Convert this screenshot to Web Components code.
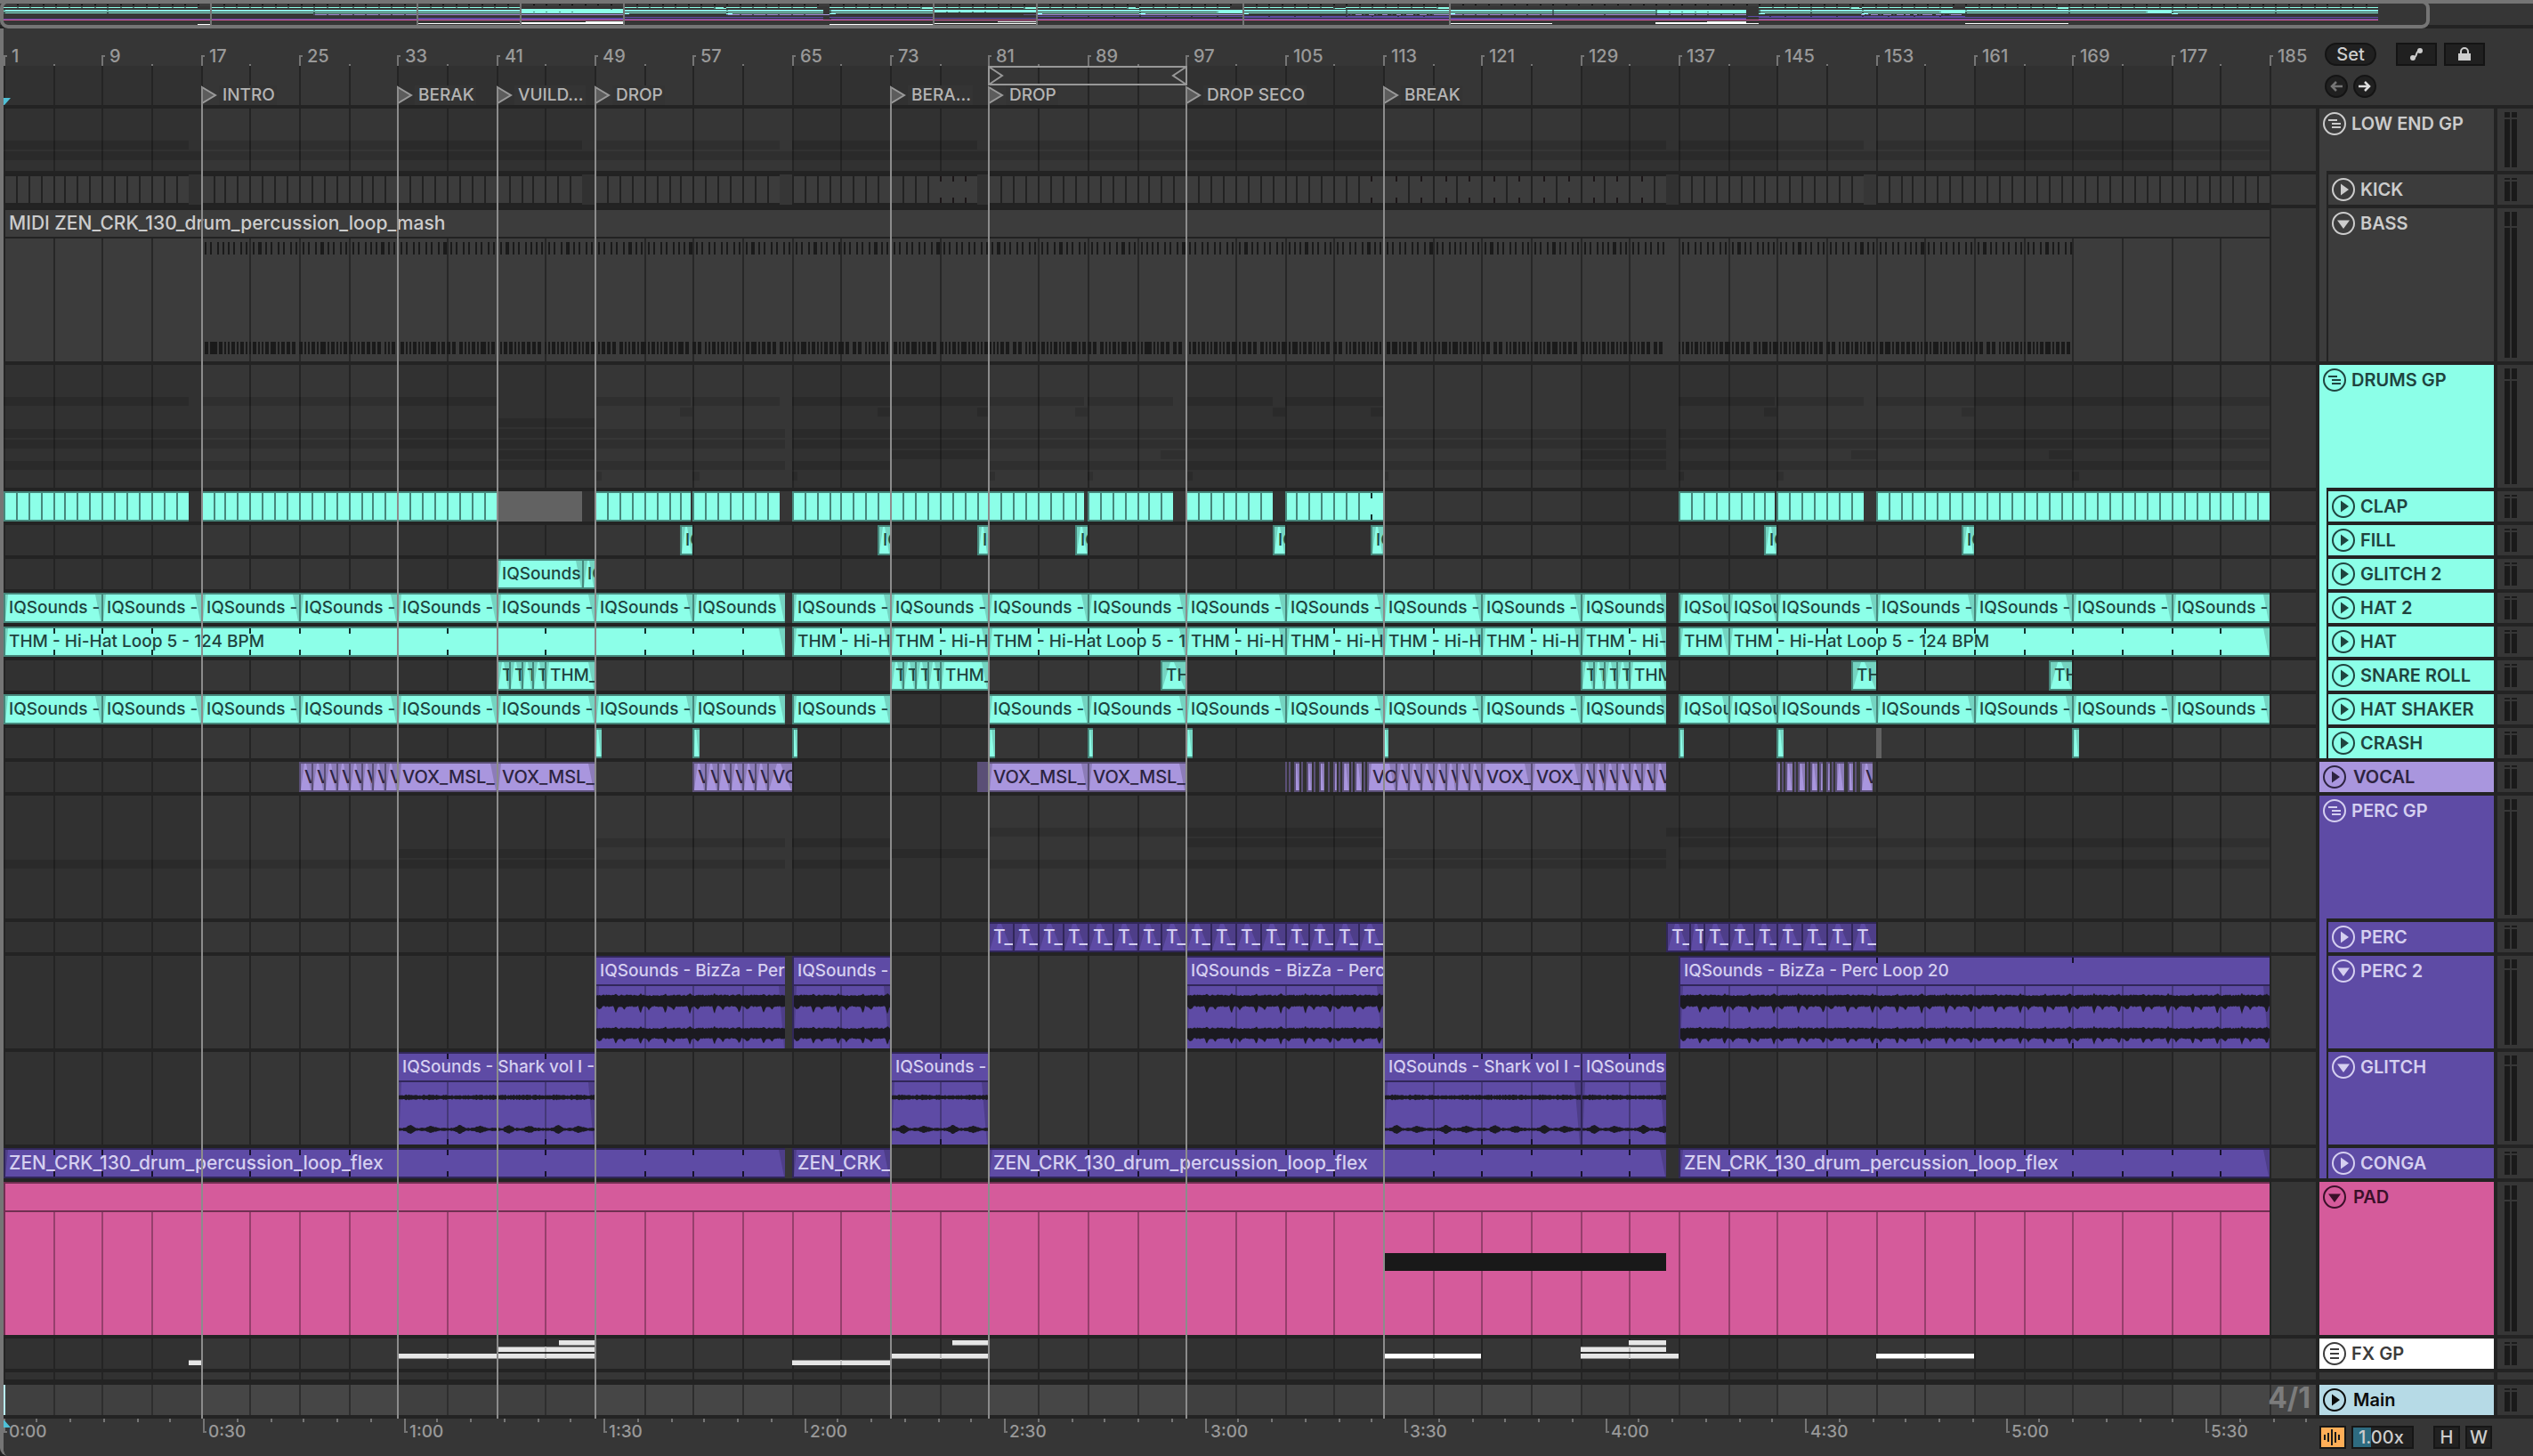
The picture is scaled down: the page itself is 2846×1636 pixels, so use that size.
<!DOCTYPE html>
<html lang="en">
<head>
<meta charset="utf-8">
<title>Arrangement</title>
<style>
html,body{margin:0;background:#232323;height:100%}
body{font:500 20px/24px Inter,"Liberation Sans",sans-serif;color:#b4b4b4}
</style>
</head>
<body>
<arrangement-view></arrangement-view>
<script>
/* Zoom level of the timeline, in pixels per bar; positions snap to the 2px grid */
const BAR = 13.84, LAST = 320;
const X = b => 2 * Math.round((b - 1) * BAR / 2 - .12);
const rect = (x, y, w, h, f) => `<rect x="${x}" y="${y}" width="${w}" height="${h}" fill="${f}"/>`;

const SKIN = {
  gray:   {bg:'#3c3c3c', edge:'#222222', ink:'#cccccc', grid:'#272727', tick:'#1c1618'},
  mint:   {bg:'#8cffe8', edge:'#46877b', ink:'#1f443f', grid:'#46877b', tick:'#12302b'},
  vocal:  {bg:'#a996de', edge:'#5a4f76', ink:'#2d2440', grid:'#5a4f76', tick:'#1d1730'},
  purple: {bg:'#5e4ba5', edge:'#31275a', ink:'#d5cff0', grid:'#453879', tick:'#17122c'},
  pink:   {bg:'#d55b9b', edge:'#712f52', ink:'#3a1029', grid:'#963f6c', tick:'#3a1029'},
  white:  {bg:'#ffffff', edge:'#8c8c8c', ink:'#3c3c3c', grid:'#8c8c8c', tick:'#3c3c3c'},
  blue:   {bg:'#b6dae6', edge:'#6d838a', ink:'#0c0c0c', grid:'#6d838a', tick:'#0c0c0c'}
};

const run = (from, to, step, text) => {
  const out = [];
  for (let b = from; b < to; b += step) out.push({s: b, e: Math.min(b + step, to), t: text});
  return out;
};
const cut = (...pairs) => pairs.map(([s, e]) => ({s, e, slice: 1}));
/* Clip names are shortened to about the room that the clip has */
const fit = (name, bars) => name.slice(0, Math.max(1, Math.ceil(bars * BAR / 8)));
const IQ = 'IQSounds -', TH = 'THM - Hi-Hat Loop 5 - 124 BPM', ZEN = 'ZEN_CRK_130_drum_percussion_loop_flex';
const SHARK = 'IQSounds - Shark vol I -', BIZ = 'IQSounds - BizZa - Perc Loop 20';

const kick = cut([1,16],[17,48],[49,64],[65,80],[81,136],[137,152],[153,185]);
const bass = [{s:1, e:185, t:'MIDI ZEN_CRK_130_drum_percussion_loop_mash', body:'midi'}];
const clap = [...cut([1,16],[17,41]), {s:41, e:48, off:1}, ...cut([49,56.8],[57,64],[65,88.7],[89,96],[97,104],[105,113],[137,144.8],[145,152],[153,185])];
const fill = [56,72,80,88,104,112,144,160].map(b => ({s:b, e:b+1, t:'IQ', fade:1}));
const glitch2 = [{s:41, e:48, t:'IQSounds'}, {s:48, e:49, t:'IQ'}];
const hat2 = [...run(1,57,8,IQ), {s:57,e:64.5,t:'IQSounds'}, ...run(65,129,8,IQ), {s:129,e:136,t:'IQSounds'}, {s:137,e:141,t:'IQSou'}, {s:141,e:145,t:'IQSou'}, ...run(145,185,8,IQ)];
const hat = [[1,64.5],[65,73],[73,81],[81,97],[97,105],[105,113],[113,121],[121,129],[129,136],[137,141],[141,185]]
  .map(([s,e]) => ({s, e, t:e - s < 5 ? 'THM' : e - s < 9 ? 'THM - Hi-H' : e - s < 17 ? 'THM - Hi-Hat Loop 5 - 1' : TH, ticks:4}));
const snare = [...run(41,45,1,'T'), {s:45,e:49,t:'THM_'}, ...run(73,77,1,'T'), {s:77,e:81,t:'THM_'}, {s:95,e:97,t:'TH'},
  ...run(129,133,1,'T'), {s:133,e:136,t:'THM'}, {s:151,e:153,t:'TH'}, {s:167,e:169,t:'TH'}];
const shaker = hat2.filter(c => c.s !== 73);
const crash = [49,57,65,81,89,97,113,137,145,153,169].map(b => ({s:b, e:b+.5, thin:1, off:b === 153}));
const px = n => (n - 4) / BAR + 1.01;
const shards = (...p) => p.map(([a, b]) => ({s:px(a), e:px(b), thin:1, solid:b - a < 4}));
const vocal = [...run(25,33,1,'V'), {s:33,e:41,t:'VOX_MSL_'}, {s:41,e:49,t:'VOX_MSL_'},
  ...run(57,63,1,'V'), {s:63,e:65,t:'VO'}, {s:80,e:81,solid:1,thin:1}, {s:81,e:89,t:'VOX_MSL_'}, {s:89,e:97,t:'VOX_MSL_'},
  ...shards([1444,1446],[1448,1450],[1454,1460],[1462,1464],[1468,1474],[1476,1478],[1482,1488],[1492,1494],[1498,1502],[1504,1506],[1508,1516],[1518,1520],[1522,1530],[1532,1534]),
  {s:px(1536),e:114,t:'VO'}, ...run(114,121,1,'V'), {s:121,e:125,t:'VOX_'}, {s:125,e:129,t:'VOX_'}, ...run(129,136,1,'V'),
  ...shards([1996,2000],[2002,2004],[2006,2014],[2016,2018],[2020,2028],[2030,2032],[2034,2042],[2044,2048],[2052,2056],[2058,2060],[2062,2072],[2076,2082],[2084,2086]),
  {s:px(2090),e:px(2104),t:'V'}];
const perc = [...run(81,113,2,'T_'), {s:136,e:137.8,t:'T_'}, {s:137.8,e:139,t:'T'}, ...run(139,153,2,'T_')];
const perc2 = [[49,64.5,'IQSounds - BizZa - Per'],[65,73,IQ],[97,113,'IQSounds - BizZa - Perc'],[137,185,BIZ]].map(([s,e,t]) => ({s, e, t, body:'loop', ticks:16}));
const glitch = [[33,49,SHARK],[73,81,IQ],[113,129,SHARK],[129,136,'IQSounds']].map(([s,e,t]) => ({s, e, t, body:'thin', ticks:4}));
const conga = [[1,64.5,ZEN],[65,73,'ZEN_CRK_'],[81,136,ZEN],[137,185,ZEN]].map(([s,e,t]) => ({s, e, t, ticks:4}));
const pad = [{s:1, e:185, t:'', body:'note'}];
const fx = [[[46.1,49],[78,81],[133,136]], [[41,49],[129,136]], [[33,41],[41,49],[73,81],[113,121],[129,137],[153,161]], [[16,17],[65,73]]]
  .map(r => r.map(([s, e]) => ({s, e})));

const TRACKS = [
  {n:'LOW END GP', skin:'gray', h:70, group:1, bands:[kick, [{s:1,e:185}]]},
  {n:'KICK', skin:'gray', h:34, child:1, clips:kick},
  {n:'BASS', skin:'gray', h:172, child:1, open:1, clips:bass, size:21},
  {n:'DRUMS GP', skin:'mint', h:138, group:1, bands:[clap.filter(c => !c.off), fill, glitch2, hat2, hat, snare, shaker, crash.filter(c => !c.off)]},
  {n:'CLAP', skin:'mint', h:34, child:1, clips:clap},
  {n:'FILL', skin:'mint', h:34, child:1, clips:fill},
  {n:'GLITCH 2', skin:'mint', h:34, child:1, clips:glitch2},
  {n:'HAT 2', skin:'mint', h:34, child:1, clips:hat2},
  {n:'HAT', skin:'mint', h:34, child:1, clips:hat},
  {n:'SNARE ROLL', skin:'mint', h:34, child:1, clips:snare},
  {n:'HAT SHAKER', skin:'mint', h:34, child:1, clips:shaker},
  {n:'CRASH', skin:'mint', h:34, child:1, clips:crash},
  {n:'VOCAL', skin:'vocal', h:34, clips:vocal, size:20},
  {n:'PERC GP', skin:'purple', h:138, group:1, bands:[perc, perc2, glitch, conga]},
  {n:'PERC', skin:'purple', h:34, child:1, clips:perc, size:21},
  {n:'PERC 2', skin:'purple', h:104, child:1, open:1, clips:perc2},
  {n:'GLITCH', skin:'purple', h:104, child:1, open:1, clips:glitch},
  {n:'CONGA', skin:'purple', h:34, child:1, clips:conga, size:21},
  {n:'PAD', skin:'pink', h:172, open:1, clips:pad},
  {n:'FX GP', skin:'white', h:34, group:1, flat:1, fx},
  {n:'', h:8, blank:1},
  {n:'Main', skin:'blue', h:34, main:1}
];
const LOCATORS = [[17,'INTRO'],[33,'BERAK'],[41,'VUILD...'],[49,'DROP'],[73,'BERA...'],[81,'DROP'],[97,'DROP SECO'],[113,'BREAK']];

/* Alternating 16-bar shading with a line every 4 bars */
function grid(h, dark = '#313131', light = '#363636', line = '#242424') {
  let s = rect(0, 0, '100%', h, light);
  for (let b = 1; b < LAST; b += 32) s += rect(X(b), 0, X(b + 16) - X(b), h, dark);
  s += gridLines(h, line, 1, LAST);
  return s;
}
function gridLines(h, line, from, to, y = 0, step = 4) {
  let d = '';
  for (let b = from; b < to; b += step) d += `M${X(b)} ${y}h2v${h}h-2z`;
  return `<path d="${d}" fill="${line}"/>`;
}

class Base extends HTMLElement {
  constructor() { super(); this.attachShadow({mode: 'open'}); }
  connectedCallback() { this.render(); }
  paint(html) { this.shadowRoot.innerHTML = html; }
}

customElements.define('song-overview', class extends Base {
  render() {
    const M = b => Math.round((b - 1) * 14.5);
    let s = rect(0, 0, 2668, 3, '#3c3c3c');
    for (let b = 2; b < 185; b++) s += rect(M(b), 1, 2, 1, '#000');
    let y = 0;
    for (const t of TRACKS) {
      if (t.fx) {
        t.fx.forEach((r, i) => r.forEach(c => s += rect(M(c.s), 20 + i, M(c.e) - M(c.s), 1, '#fff')));
        break;
      }
      if (t.clips && t.skin !== 'gray') {
        const k = SKIN[t.skin];
        for (const c of t.clips) {
          if (c.off) continue;
          s += rect(M(c.s), y, Math.max(2, M(c.e) - M(c.s)), 1, c.solid ? k.edge : k.bg);
          if (c.slice) for (let b = c.s + 1; b < c.e; b++) s += rect(M(b), y, 2, 1, k.edge);
          else if (c.e - c.s >= 1 && c.e - c.s < 9 && !c.body) s += rect(M(c.s), y, 2, 1, k.edge);
        }
      }
      y++;
    }
    for (const [b] of LOCATORS) s += rect(M(b), 0, 2, 24, '#757575');
    this.paint(`<style>
      :host{display:flex;height:32px;background:linear-gradient(#757575 4px,#363636 4px 28px,#232323 28px)}
      .frame{flex:1;margin-right:116px;box-sizing:border-box;border:4px solid #757575;border-radius:9px;background:#363636;overflow:hidden}
      svg{display:block;width:100%;height:24px}
    </style><div class="frame"><svg shape-rendering="crispEdges" role="img" aria-label="Song overview">${s}</svg></div>`);
  }
});

customElements.define('bar-ruler', class extends Base {
  render() {
    let ticks = '', nums = '';
    for (let b = 1; b < 189; b += 4) {
      if ((b - 1) % 8) ticks += `M${X(b)} 40h2v2h-2z`;
      else {
        ticks += `M${X(b)} 30h4v2h-2v10h-2z`;
        nums += `<span style="left:${X(b)}px">${b}</span>`;
      }
    }
    this.paint(`<style>
      :host{display:block;position:relative;height:42px;background:#363636;overflow:hidden;color:#999}
      svg{display:block;width:100%;height:42px}
      span{position:absolute;top:19px;padding-left:9px}
    </style><svg shape-rendering="crispEdges"><path d="${ticks}" fill="#757575"/></svg>${nums}`);
  }
});

customElements.define('locator-strip', class extends Base {
  render() {
    const w = X(97) - X(81) + 2;
    const marks = LOCATORS.map(([b, t]) => `<div class="mark" style="left:${X(b)}px">
      <svg width="18" height="22"><path d="M1 2L16 11L1 20Z" fill="#5c5c5c" stroke="#9a9a9a" stroke-width="2"/></svg><span>${t}</span></div>`).join('');
    this.paint(`<style>
      :host{display:block;position:relative;height:44px;overflow:hidden;font-size:19px}
      .grid{display:block;width:100%;height:44px}
      .mark{position:absolute;top:22px;height:22px;display:flex;align-items:center}
      .mark span{padding:0 2px 0 4px;margin-left:2px;line-height:22px;background:#343434}
      .loop{position:absolute;top:0;left:${X(81)}px}
      .start{position:absolute;left:0;top:36px}
    </style><svg class="grid" shape-rendering="crispEdges">${grid(44)}</svg>
    <svg class="loop" width="${w}" height="22" fill="none" stroke="#989898" stroke-width="2"><rect x="1" y="1" width="${w - 2}" height="20"/><path d="M1 1L16 11L1 21M${w - 1} 1L${w - 16} 11L${w - 1} 21"/></svg>
    ${marks}<svg class="start" width="8" height="8"><path d="M0 0H8L1 8H0Z" fill="#4fc0d6"/></svg>`);
  }
});

function wave(kind, w) {
  const edge = [[], [], [], []];
  const n = i => { const v = Math.sin(i * 12.9898) * 43758.5453; return v - Math.floor(v); };
  for (let x = 0; x <= w; x++) {
    const r = n(x % 166), q = n((x % 166) + 400);
    if (kind === 'loop') {
      const p = x % 27.68, spike = Math.max(0, 8 - Math.abs(p - 24) * 3), dip = Math.max(0, 4 - Math.abs(p - 5.5) * 1.2);
      const top = r * 1.6 + Math.max(0, 2 - Math.abs(p - 24));
      edge[0].push([x, 11 - top]); edge[1].push([x, 22 + q * 1.6 + spike + dip]);
      edge[2].push([x, 48 - top]); edge[3].push([x, 58 + q * 1.6 + spike * .8 + dip]);
    } else {
      const p = x % 55.36, a = 1.6 + r * 1.6, bump = Math.max(0, 3.4 - Math.abs(p - 15) * .5) + Math.max(0, 2.4 - Math.abs(p - 38) * .3);
      edge[0].push([x, 17 - a]); edge[1].push([x, 17 + a]);
      edge[2].push([x, 53 - 1 - q - bump]); edge[3].push([x, 53 + 1 + q + bump]);
    }
  }
  const shape = (a, b) => 'M' + a.concat(b.reverse()).map(p => p[0] + ' ' + p[1].toFixed(1)).join('L') + 'Z';
  return `<path d="${shape(edge[0], edge[1])}${shape(edge[2], edge[3])}" fill="#1b1a21"/>`;
}

function midi() {
  let top = '', low = '', i = 0;
  const wide = [2,4,4,4,4,2,2,4,2,4,2,2,4,2,2,4,4,2];
  for (let b = 17; b < 169; b++) {
    if (b === 136) continue;
    const x = X(b);
    top += rect(x + 4, 4, 2, 14, '#1a1a1a') + rect(x + 10, 4, b % 5 === 1 ? 4 : 2, 14, '#1a1a1a');
    for (let p = x; p < x + 12;) { const w = wide[i++ % wide.length]; low += rect(p, 116, w, 14, '#1a1a1a'); p += w + 2; }
  }
  return top + low;
}

customElements.define('clip-lane', class extends Base {
  render() {
    const t = this.track, h = t.h, k = SKIN[t.skin];
    let back = t.main ? grid(h, '#404040', '#464646', '#2e2e2e') : grid(h);
    (t.bands || []).forEach((r, i) => r.forEach(c => back += rect(X(c.s), 36 + i * 12, X(c.e) - X(c.s), 10, 'rgba(0,0,0,.13)')));
    (t.fx || []).forEach((r, i) => r.forEach(c => {
      const x = X(c.s), w = X(c.e) - x, y = [2, 9, 17, 24][i], f = c.s === 113 || c.s === 153 ? '#fff' : '#e6e6e6';
      back += rect(x, y, w, 6, f) + rect(x, i % 2 ? y : y + 5, w, 1, '#8f8f8f');
      for (let b = Math.ceil((c.s + 3) / 4) * 4 + 1; b < c.e; b += 4) back += rect(X(b), y, 2, 6, '#bdbdbd');
    }));
    let clips = '';
    for (const c of t.clips || []) {
      const x = X(c.s), w = Math.max(2, X(c.e) - x);
      let svg = '';
      if (c.off) { clips += `<div class="clip off" style="left:${x}px;width:${w}px"></div>`; continue; }
      if (c.slice) {
        let d = '', tk = '';
        for (let b = c.s; b < c.e; b++) {
          const o = X(b) - x;
          const merged = t.n === 'KICK' ? (b > 76 && b < 80) || (b > 111 && b < 136 && b % 2 === 0) : b === 112;
          if (merged) tk += `M${o} 2h2v6h-2zM${o} 26h2v6h-2z`; else d += `M${o} 0h2v34h-2z`;
        }
        svg = `<path d="${d}" fill="${k.edge}"/><path d="${tk}" fill="${k.tick}"/>`;
      } else if (!c.solid) {
        const y0 = c.body ? 34 : 2, y1 = c.body ? h : h - 2, f = 'rgba(0,0,0,.17)';
        if (c.body) {
          let d = '';
          for (let b = c.s + 4; b < c.e; b += 4) d += `M${X(b) - x} 34h2v${h - 34}h-2z`;
          svg += `<path d="${d}" fill="${k.grid}"/>` + rect(0, 32, w, 2, k.edge);
        }
        if (c.body === 'midi') svg += `<g transform="translate(0 34)">${midi()}</g>`;
        else if (c.body === 'note') svg += rect(X(113) + 2, 80, X(136) - X(113) - 2, 20, '#191919');
        else {
          const r = w > 30 ? 7 : Math.round(w * .45), l = w > 30 ? 5 : Math.round(w * .4);
          svg += `<g shape-rendering="auto" fill="${f}"><path d="M${w - r} ${y0}H${w}V${y1}H${w - 1}Z"/><path d="M0 ${y0}H${l}L2 ${y1}H0Z"/></g>`;
          if (c.body) svg += `<g shape-rendering="auto" transform="translate(0 34)">${wave(c.body, w)}</g>`;
        }
        if (c.ticks) {
          let d = '';
          for (let b = c.s + c.ticks; b < c.e; b += c.ticks) d += `M${X(b) - x} 2h2v6h-2zM${X(b) - x} ${y1 - 6}h2v6h-2z`;
          svg += `<path d="${d}" fill="${k.tick}"/>`;
        }
      }
      clips += `<div class="clip${c.solid ? ' solid' : ''}${c.body ? ' open' : ''}" style="left:${x}px;width:${w}px"><svg shape-rendering="crispEdges">${svg}</svg>${c.t ? `<span>${c.t}</span>` : ''}</div>`;
    }
    this.paint(`<style>
      :host{display:block;position:relative;flex:1;min-width:0;overflow:hidden;height:${h}px}
      .grid{display:block;width:100%;height:${h}px}
      .clip{position:absolute;top:0;height:${h}px;box-sizing:border-box;overflow:hidden;white-space:pre;font-size:${t.size || 19}px;
        background:${k ? k.bg : 'none'};color:${k ? k.ink : 'inherit'};
        border:solid ${k ? k.edge : '#000'};border-width:2px 0 2px 2px}
      .clip.open{border-bottom-width:0}
      .clip svg{position:absolute;left:-2px;top:-2px;width:calc(100% + 2px);height:${h}px}
      .clip span{position:relative;display:block;padding-left:4px;line-height:30px}
      .clip.solid{background:${k ? k.edge : 'none'}}
      .clip.off{background:#626262;border:0}
      .sig{position:absolute;right:6px;top:0;font-size:32px;font-weight:700;line-height:30px;color:#7c7c7c}
      .cue{position:absolute;left:0;top:0;width:2px;height:34px;background:#b9edf6}
    </style><svg class="grid" shape-rendering="crispEdges">${back}</svg>${clips}${t.main ? '<i class="cue"></i><span class="sig">4/1</span>' : ''}`);
  }
});

customElements.define('track-header', class extends Base {
  render() {
    const t = this.track;
    if (t.blank) { this.paint('<style>:host{display:block;flex:none;width:196px;background:#363636}</style>'); return; }
    const k = SKIN[t.skin], ink = k.ink;
    const glyph = t.flat ? `<path d="M8 8h10M8 13h10M8 18h10" stroke="${ink}" stroke-width="2"/>`
      : t.group ? `<path d="M6 9h10M10 13h10M10 17h10" stroke="${ink}" stroke-width="2"/>`
      : t.open ? `<path d="M6 9.500H20L13 19Z" fill="${ink}"/>` : `<path d="M10 6.500V19.500L19 13Z" fill="${ink}"/>`;
    this.paint(`<style>
      :host{display:flex;flex:none;width:196px;height:${t.h}px;color:${ink}}
      .strip{flex:none;width:8px;margin:-4px 2px 0 0;background:${k.bg}}
      .name{flex:1;display:flex;align-items:flex-start;gap:${t.group || t.child ? 6 : 8}px;padding:4px 0 0 4px;background:${k.bg};font-weight:600;line-height:26px;white-space:nowrap}
      button{all:unset;display:block;width:26px;height:26px;cursor:pointer}
      svg{display:block}
    </style>${t.child ? '<div class="strip"></div>' : ''}<div class="name"><button aria-label="${t.open ? 'Fold' : 'Unfold'} ${t.n}"><svg width="26" height="26"><circle cx="13" cy="13" r="12" fill="none" stroke="${ink}" stroke-width="2"/>${glyph}</svg></button><span>${t.n}</span></div>`);
  }
});

customElements.define('level-meter', class extends Base {
  render() {
    const t = this.track, cap = t.h > 160 ? 16 : t.h > 130 ? 12 : t.h > 100 ? 10 : t.h > 60 ? 6 : 2;
    this.paint(`<style>
      :host{display:flex;flex:none;width:40px;box-sizing:border-box;padding:4px 0 4px 8px;gap:2px;background:#363636}
      div{width:6px;display:flex;flex-direction:column;gap:2px}
      i{background:#1a1a1a;height:${cap}px}
      i+i{height:auto;flex:1}
    </style>${t.blank ? '' : '<div><i></i><i></i></div><div><i></i><i></i></div>'}`);
  }
});

customElements.define('track-row', class extends Base {
  render() {
    const t = this.track;
    this.paint(`<style>:host{display:flex;gap:4px;height:${t.h}px;${t.main ? 'margin-top:2px' : ''}}</style>`);
    for (const tag of ['clip-lane', 'track-header', 'level-meter']) {
      const el = document.createElement(tag);
      el.track = t;
      this.shadowRoot.append(el);
    }
  }
});

customElements.define('view-controls', class extends Base {
  render() {
    this.paint(`<style>
      :host{display:flex;flex-direction:column;gap:10px;flex:none;width:244px;box-sizing:border-box;padding:16px 0 0 10px;background:#363636}
      .row{display:flex}
      button{box-sizing:border-box;height:26px;padding:0;border:2px solid #141414;background:#202020;color:#cdcdcd;font:inherit;line-height:22px;display:flex;align-items:center;justify-content:center}
      .set{width:58px;border-radius:13px;margin-right:22px}
      .sq{width:46px;margin-right:8px}
      .rd{width:26px;border-radius:13px;margin-right:6px}
    </style>
    <div class="row"><button class="set">Set</button>
      <button class="sq" aria-label="Automation mode"><svg width="20" height="18" fill="none" stroke="#cdcdcd" stroke-width="2"><circle cx="6" cy="13" r="2" fill="#cdcdcd"/><circle cx="14" cy="5" r="2" fill="#cdcdcd"/><path d="M6 13C12 13 8 5 14 5"/></svg></button>
      <button class="sq" aria-label="Lock envelopes"><svg width="16" height="18"><path d="M1 8H15V16H1Z" fill="#cdcdcd"/><path d="M4 9V6a4 4 0 0 1 8 0V9" fill="none" stroke="#cdcdcd" stroke-width="2"/></svg></button></div>
    <div class="row"><button class="rd" aria-label="Previous locator"><svg width="16" height="14" fill="none" stroke="#757575" stroke-width="2.500"><path d="M15 7H3M8 2L3 7L8 12"/></svg></button>
      <button class="rd" aria-label="Next locator"><svg width="16" height="14" fill="none" stroke="#dedede" stroke-width="2.500"><path d="M1 7H13M8 2L13 7L8 12"/></svg></button></div>`);
  }
});

customElements.define('time-ruler', class extends Base {
  render() {
    let ticks = '', nums = '';
    for (let s = 0; s * 7.5 < 2598; s += 5) {
      const x = 2 * Math.round(s * 7.5 / 2 - .3);
      if (s % 30) ticks += `M${x} 0h2v4h-2z`;
      else {
        ticks += `M${x} 0h2v14h2v2h-4z`;
        nums += `<span style="left:${x}px">${Math.floor(s / 60)}:${s % 60 ? '30' : '00'}</span>`;
      }
    }
    this.paint(`<style>
      :host{display:block;flex:1;min-width:0;position:relative;overflow:hidden;color:#999;font-size:19px}
      svg{display:block;width:100%;height:20px}
      span{position:absolute;top:3px;padding-left:6px}
      .pos{position:absolute;left:0;top:2px;width:8px;height:8px}
    </style><svg shape-rendering="crispEdges"><path d="${ticks}" fill="#757575"/></svg><svg class="pos"><path d="M0 0H1L8 8H0Z" fill="#4fc0d6"/></svg>${nums}`);
  }
});

customElements.define('footer-controls', class extends Base {
  render() {
    this.paint(`<style>
      :host{display:flex;flex:none;width:240px;box-sizing:border-box;padding-top:8px;height:42px}
      button,input{box-sizing:border-box;height:26px;padding:0;border:2px solid #161616;background:#212121;color:#cdcdcd;font:inherit;line-height:22px}
      .wave{width:30px;background:#ffae57;margin-right:6px}
      .wave svg{display:block;margin:0 auto}
      input{width:70px;margin-right:22px;padding-left:6px;background:linear-gradient(90deg,#2e6b80 20px,#212121 20px)}
      .k{width:30px;margin-right:6px}
    </style><button class="wave" aria-label="Audio overview"><svg width="22" height="22"><path d="M2 8v6M6 6v10M10 2v18M14 5v12M18 8v6" stroke="#1a1a1a" stroke-width="2"/></svg></button>
    <input aria-label="Waveform zoom" value="1.00x"><button class="k">H</button><button class="k">W</button>`);
  }
});

customElements.define('arrangement-view', class extends Base {
  render() {
    const lines = LOCATORS.map(([b]) => `<i style="left:${X(b)}px"></i>`).join('');
    this.paint(`<style>
      :host{display:block;background:#232323}
      .body{position:relative;box-sizing:border-box;border-left:4px solid #757575;border-radius:0 0 0 9px;overflow:hidden}
      .top{display:flex}
      .scale{flex:1;min-width:0}
      .tracks{display:flex;flex-direction:column;gap:4px;padding:4px 0}
      .foot{display:flex;gap:4px;background:#363636}
      .lines{position:absolute;left:0;right:244px;top:66px;bottom:42px;overflow:hidden;pointer-events:none}
      .lines i{position:absolute;top:0;bottom:0;width:2px;background:#8c8c8c}
    </style>
    <song-overview></song-overview>
    <div class="body">
      <div class="top"><div class="scale"><bar-ruler></bar-ruler><locator-strip></locator-strip></div><view-controls></view-controls></div>
      <div class="tracks"></div>
      <div class="foot"><time-ruler></time-ruler><footer-controls></footer-controls></div>
      <div class="lines">${lines}</div>
    </div>`);
    const box = this.shadowRoot.querySelector('.tracks');
    for (const t of TRACKS) {
      const row = document.createElement('track-row');
      row.track = t;
      box.append(row);
    }
  }
});
</script>
</body>
</html>
